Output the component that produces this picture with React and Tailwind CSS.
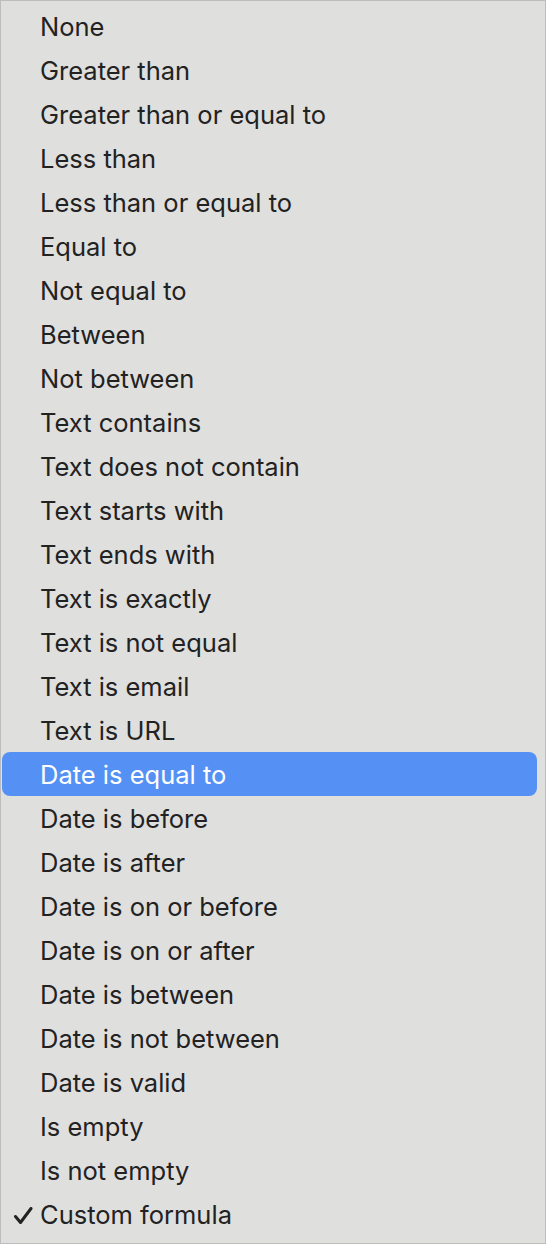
const items = [
  'None',
  'Greater than',
  'Greater than or equal to',
  'Less than',
  'Less than or equal to',
  'Equal to',
  'Not equal to',
  'Between',
  'Not between',
  'Text contains',
  'Text does not contain',
  'Text starts with',
  'Text ends with',
  'Text is exactly',
  'Text is not equal',
  'Text is email',
  'Text is URL',
  'Date is equal to',
  'Date is before',
  'Date is after',
  'Date is on or before',
  'Date is on or after',
  'Date is between',
  'Date is not between',
  'Date is valid',
  'Is empty',
  'Is not empty',
  'Custom formula',
];

const HIGHLIGHTED = 'Date is equal to';
const CHECKED = 'Custom formula';

function MenuItem({ label }) {
  const active = label === HIGHLIGHTED;
  return (
    <div
      className={
        'relative flex h-[44px] items-center rounded-[8px] pl-[38px] pt-[2px] ' +
        (active ? 'bg-[#5591f4] text-white' : 'text-[#222222]')
      }
    >
      {label === CHECKED && (
        <svg
          className="absolute left-[11px] top-[15px] h-[18px] w-[20px]"
          viewBox="0 0 20 18"
          fill="none"
        >
          <path d="M2.5 9.5 L7.5 15.5 L18 1.5" stroke="#222" strokeWidth="3" strokeLinecap="round" strokeLinejoin="round" />
        </svg>
      )}
      <span className="text-[25.5px] leading-none">{label}</span>
    </div>
  );
}

export default function App() {
  return (
    <div
      className="h-[1244px] w-[546px] overflow-hidden border border-[#bdbdbd] bg-[#dfdfde] pl-[1px] pr-[8px] pt-[3px]"
      style={{ fontFamily: 'Inter, "Noto Sans", sans-serif' }}
    >
      {items.map((label) => (
        <MenuItem key={label} label={label} />
      ))}
    </div>
  );
}
